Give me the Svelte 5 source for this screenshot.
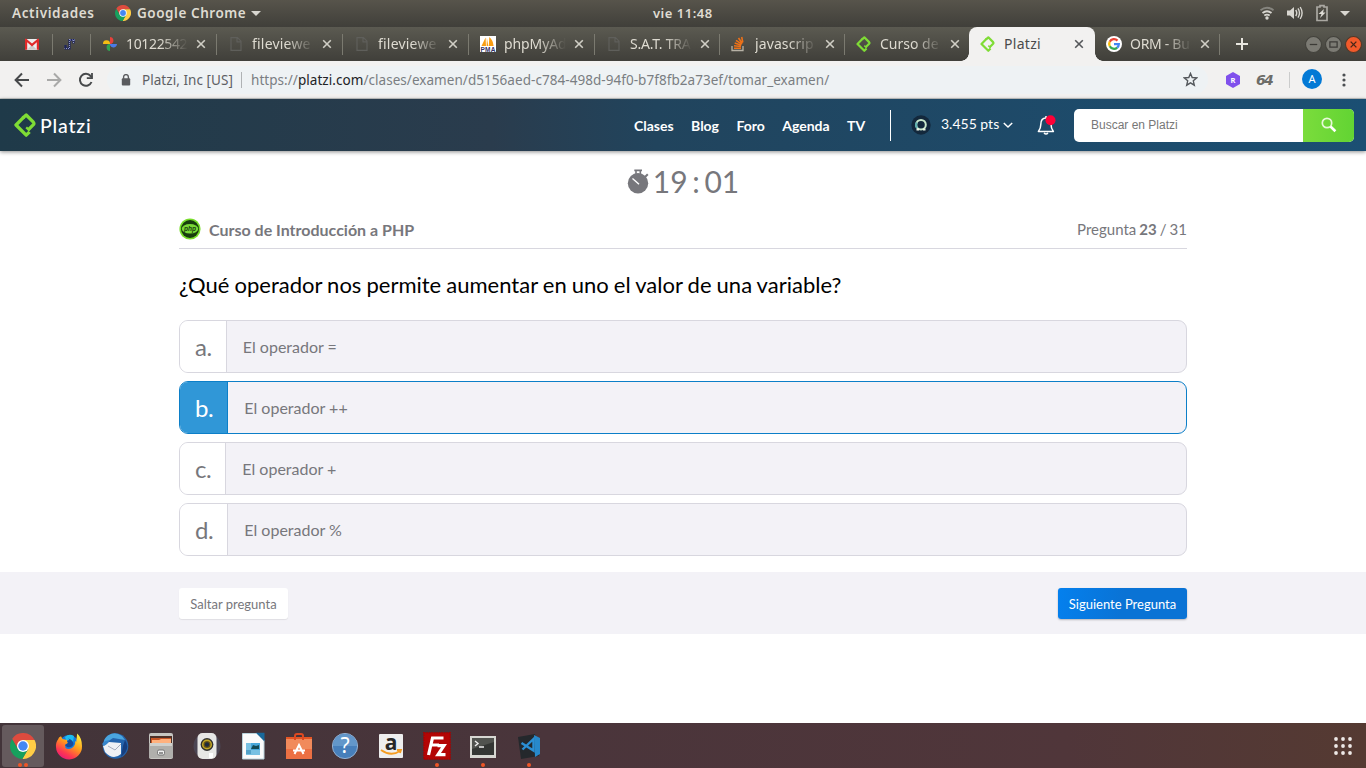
<script>
  const tabs = [
    { icon: 'gmail', w: 53, pad: 25 },
    { icon: 'notes', w: 38, pad: 9 },
    { icon: 'photos', title: '10122542', w: 126, ls: -0.35 },
    { icon: 'file', title: 'fileviewe', w: 126, ls: 0.2 },
    { icon: 'file', title: 'fileviewe', w: 126, ls: 0.2 },
    { icon: 'pma', title: 'phpMyAd', w: 126, ls: -0.1 },
    { icon: 'file', title: 'S.A.T. TRA', w: 125, ls: -0.25 },
    { icon: 'stack', title: 'javascrip', w: 125, ls: 0.1 },
    { icon: 'platzi', title: 'Curso de', w: 124, ls: 0 },
    { icon: 'platzi', title: 'Platzi', w: 126, active: true, ls: 0.3 },
    { icon: 'google', title: 'ORM - Bu', w: 125, ls: -0.3 }
  ];
  const nav = ['Clases', 'Blog', 'Foro', 'Agenda', 'TV'];
  const options = [
    ['a', 'El operador ='],
    ['b', 'El operador ++'],
    ['c', 'El operador +'],
    ['d', 'El operador %']
  ];
  const selected = 'b';
  const dock = [
    { icon: 'chrome', dots: 2, active: true },
    { icon: 'firefox' },
    { icon: 'thunderbird' },
    { icon: 'files' },
    { icon: 'rhythmbox' },
    { icon: 'writer' },
    { icon: 'software' },
    { icon: 'help' },
    { icon: 'amazon' },
    { icon: 'filezilla', dots: 1 },
    { icon: 'terminal', dots: 1 },
    { icon: 'code', dots: 1 }
  ];
</script>

{#snippet chrome(size)}
  <svg width={size} height={size} viewBox="2 2 44 44">
    <path fill="#dd4b3e" d="M24 14H43.6A22 22 0 0 0 5.54 12.03L15.34 29Z" />
    <path fill="#ffcd46" d="M32.66 29L22.86 45.97A22 22 0 0 0 43.6 14H24Z" />
    <path fill="#17a05d" d="M15.34 29L5.54 12.03A22 22 0 0 0 22.86 45.97L32.66 29Z" />
    <circle cx="24" cy="24" r="10.2" fill="#fff" />
    <circle cx="24" cy="24" r="8" fill="#4587f3" />
  </svg>
{/snippet}

{#snippet platzi(w, h)}
  <svg width={w} height={h} viewBox="0 0 22 24" fill="none" stroke="#7fdc35" stroke-width="3.3" stroke-linejoin="round">
    <path d="M8.6 5.2L12.2 2L19.4 9.2Q20.4 10.4 19.4 11.6L14.2 16.8" />
    <path d="M10 3.8L2 12L12.2 22.2L15.6 18.8" />
    <path d="M12.2 14.4L15.6 17.6" stroke-width="2.2" />
  </svg>
{/snippet}

{#snippet favicon(name)}
  {#if name === 'platzi'}
    {@render platzi(15, 16)}
  {:else}
    <svg width="16" height="16" viewBox="0 0 16 16">
      {#if name === 'gmail'}
        <path fill="#eee" d="M1.5 3H14.5V14H1.5Z" />
        <path fill="#ccc" d="M3 13.8L8 9L13 13.8Z" />
        <path fill="#e02a2a" d="M1 3.6Q1 2.6 2 2.6L8 7.6L14 2.6Q15 2.6 15 3.6V13.8H12.8V6.3L8 10.5L3.2 6.3V13.8H1Z" />
      {:else if name === 'notes'}
        <g fill="none" stroke="#20265d" stroke-width="2.2"><path d="M8.5 3V12.5H4.5V9M8 4H14M12.5 3V7.5" /></g>
        <g fill="none" stroke="#b4badf" stroke-width=".8" stroke-dasharray="1 1"><path d="M8.5 3V12.5H3.5M9 4H14M12.5 4V7" /></g>
      {:else if name === 'photos'}
        <path fill="#f5bd13" d="M1 8A3.5 3.5 0 0 1 8 7.6V8Z" /><path fill="#e8413b" d="M8 1A3.6 3.6 0 0 1 9 8H8Z" />
        <path fill="#4b7be8" d="M15 8A3.6 3.6 0 0 1 8 9V8Z" /><path fill="#30a352" d="M8 15A3.6 3.6 0 0 1 7 8H8Z" />
      {:else if name === 'file'}
        <path fill="none" stroke="#5f5f5b" stroke-width="1.2" d="M3 1.6H9.5L13 5.2V14.4H3ZM9 1.6V5.8H13" />
      {:else if name === 'pma'}
        <path fill="#fff" d="M0 0H16V16H0Z" /><path fill="#f99d12" d="M1.5 10L5.6 1.5L6 10ZM6.6 10L6.9 2L8.3 10ZM8.8 10L9.3 1Q13 4 13.6 10Z" />
        <text x="8" y="15.7" text-anchor="middle" textLength="15" font-family="Liberation Sans" font-weight="700" font-size="6.5" fill="#333266">PMA</text>
      {:else if name === 'stack'}
        <path fill="none" stroke="#b7b2a6" stroke-width="1.3" d="M1 10V14.5H12V10" />
        <path fill="none" stroke="#ed7118" stroke-width="1.6" d="M3 12.3H10M3 9.8L10 10.5M3.7 7.1L10.3 9.2M5 4.4L10.8 8.1M7.5 2L11.3 7.5M10.7 1L11.8 6.4" />
      {:else if name === 'google'}
        <circle cx="8" cy="8" r="8" fill="#fff" />
        <g fill="none" stroke-width="2.3"><path stroke="#ea4335" d="M11.5 4.6A4.8 4.8 0 0 0 3.7 5.8" /><path stroke="#fbbc05" d="M3.7 5.8A4.8 4.8 0 0 0 3.8 10.3" /><path stroke="#34a853" d="M3.8 10.3A4.8 4.8 0 0 0 11.2 11.6" /><path stroke="#4285f4" d="M11.2 11.6A4.8 4.8 0 0 0 12.8 8.2H8" /></g>
      {/if}
    </svg>
  {/if}
{/snippet}

{#snippet appicon(name)}
  {#if name === 'chrome'}
    {@render chrome(26)}
  {:else}
    <svg width="28" height="28" viewBox="0 0 28 28">
      {#if name === 'firefox'}
        <defs><linearGradient id="ff" x1=".8" y1="0" x2=".2" y2="1"><stop offset="0" stop-color="#fff23f" /><stop offset=".42" stop-color="#ff9c1c" /><stop offset=".75" stop-color="#ff3850" /><stop offset="1" stop-color="#e51580" /></linearGradient></defs>
        <circle cx="14" cy="13" r="10" fill="#177bdd" />
        <path fill="#1bbdf0" d="M10 5Q14 1 19 4L18 10L11 8Z" />
        <path fill="url(#ff)" d="M4 5.5L6 4.2L7.5 7L12 8L13 11L10 13L10.5 16Q13 18 17 16Q21 13 20 9L21.2 10L22.2 1.5Q27 6 27 14A13 13 0 0 1 1 15Q.7 10 3 7.5Z" />
        <path fill="#174b9d" d="M10 13L13 11L12 9L14.5 7.8L13 6.6Q18 8 18.5 12Q17 16 12 15Z" />
      {:else if name === 'thunderbird'}
        <circle cx="14.5" cy="14" r="12.8" fill="#2464ac" />
        <path fill="#4aa5df" d="M7 3.5Q14 -1 21 4L24 8L12 6L3 12Q2 7 7 3.5Z" /><path fill="#173f7f" d="M24 8Q30 17 20 25L22 14Z" />
        <path fill="#eff1f5" d="M2 14L8 10L20 11L20 22Q12 29 4 20Z" />
        <path fill="none" stroke="#a6adbd" d="M7 14L14 18L20 12" /><path fill="#3685cc" d="M1 12L4 9L9 8L6 12L3 14Z" />
      {:else if name === 'files'}
        <rect x="2" y="1" width="24" height="26" rx="2" fill="#c6c5c1" /><rect x="3" y="4" width="22" height="8" fill="#4e3027" />
        <path fill="#c85524" d="M4 6H24V11H4Z" /><path fill="#ffb17e" d="M5 8L12 8L14 7H24V11H5Z" /><path fill="#b0afac" d="M2 11H26V26H2Z" /><path fill="#d0d0cd" d="M3 11H25V14H3Z" />
        <rect x="10.5" y="18" width="7" height="5" rx="1.5" fill="#eee" stroke="#666" stroke-width=".8" /><path stroke="#555" stroke-width="1.2" d="M12 21H16" />
      {:else if name === 'rhythmbox'}
        <circle cx="14" cy="14" r="13.5" fill="#56607a" opacity=".4" /><rect x="4.5" y="1" width="19" height="26" rx="5" fill="#e7e7e5" />
        <circle cx="14" cy="12.5" r="6.4" fill="#313130" /><circle cx="14" cy="12.5" r="4.3" fill="#665314" stroke="#c2a626" stroke-width="1.5" /><circle cx="14" cy="12.5" r="2.2" fill="#1f2a3d" /><path fill="#fff" d="M16 21H20V26H16Z" />
      {:else if name === 'writer'}
        <path fill="#fbfbfb" stroke="#b9d3dc" d="M3.5 1.5H18L25 8.5V27H3.5Z" /><path fill="#18699b" d="M17 .8H25.5V9.5Z" />
        <path fill="#78c1e3" d="M7 11H21V23H7Z" /><path fill="#48a7da" d="M12 11H21V18H12Z" /><path fill="#124954" d="M12 17L14 13L17 14L20 13V17Z" /><path stroke="#2f83ae" d="M7 19H12M7 21H12" />
      {:else if name === 'software'}
        <path fill="#e55625" d="M1 5H27V27H1Z" /><path fill="#f18a5b" d="M1 7H27V27H1Z" /><path fill="#ec7043" d="M1 17H27V27H1Z" /><path fill="none" stroke="#df4921" stroke-width="2" d="M10 8V4Q10 2 12 2H16Q18 2 18 4V8" />
        <path fill="none" stroke="#fff" stroke-width="2" d="M9.5 22L14 13L18.5 22M8 18.5H20" />
      {:else if name === 'help'}
        <circle cx="14" cy="14" r="12.6" fill="#477fbb" stroke="#92afd0" /><path fill="#6397ca" d="M2 14A12 12 0 0 1 26 14Z" /><text x="14" y="21" text-anchor="middle" font-family="Noto Sans" font-size="21" fill="#fff">?</text>
      {:else if name === 'amazon'}
        <rect x="2" y="2" width="24" height="24" rx="1" fill="#eee" /><text x="14" y="18" text-anchor="middle" font-family="Open Sans" font-weight="700" font-size="21" fill="#272727">a</text>
        <path fill="none" stroke="#f49c22" stroke-width="1.8" d="M4 18Q14 25 23 19M20 18H24L23 21" />
      {:else if name === 'filezilla'}
        <path fill="#b30505" stroke="#a50303" stroke-width="1.4" stroke-dasharray="1.5 1" d="M.8 .8H27.2V27.2H.8Z" /><path fill="none" stroke="#fff" stroke-width="3.2" d="M5.5 23L9.5 6H20.5M8 13H16M14.5 13.6H21L15 22.6H22.5" />
      {:else if name === 'terminal'}
        <path fill="#d7d7d2" d="M1 4H27V26H1Z" /><path fill="#343634" d="M3 6H25V23H3Z" /><path fill="#51534f" d="M3 6H25V10L3 17Z" /><path fill="none" stroke="#eee" stroke-width="1.4" d="M6 9L9 11.5L6 14M10 15H15" />
      {:else if name === 'code'}
        <path fill="#24282c" d="M3 5L20 2L24 24L6 27Z" /><path fill="none" stroke="#2b8fd4" stroke-width="2.4" d="M6.5 11L18.5 18.5V7L7.5 17.5" /><path fill="#2789cb" d="M19 3L25 6V22L20 25Z" />
      {/if}
    </svg>
  {/if}
{/snippet}

<div class="screen">
  <div class="system">
    <span class="activities">Actividades</span>
    <span class="app">{@render chrome(16)}<b>Google Chrome</b><i class="caret"></i></span>
    <span class="clock">vie 11:48</span>
    <span class="tray">
      <svg width="16" height="16" viewBox="0 0 16 16" fill="none" stroke-width="1.8"><path stroke="#85847e" d="M1.5 5.2Q8 .3 14.5 5.2" /><path stroke="#d8d6d0" d="M3.5 8Q8 4.4 12.5 8M5.3 10.5Q8 8.7 10.7 10.5" /><circle cx="8" cy="13" r="1.7" fill="#d8d6d0" /></svg>
      <svg width="16" height="16" viewBox="0 0 16 16" fill="none" stroke="#d8d6d0" stroke-width="1.4"><path fill="#d8d6d0" stroke="none" d="M0 5.5H3L7 2V14L3 10.5H0Z" /><path d="M8.7 5Q10.8 8 8.7 11M11 3.4Q14 8 11 12.6M13.2 2Q17 8 13.2 14" /></svg>
      <svg width="14" height="18" viewBox="0 0 14 18"><path fill="none" stroke="#aaa8a2" stroke-width="1.7" d="M2 3H5V1.6H9V3H12V16.5H2Z" /><path fill="#dedcd6" d="M9 5L3.5 10H6.5L5 14L10.5 8.5H8Z" /></svg>
      <i class="caret"></i>
    </span>
  </div>

  <div class="tabs">
    {#each tabs as tab, i}
      <div class="tab" class:active={tab.active} class:nosep={i === 8} style:width="{tab.w}px" style:padding-left="{tab.pad ?? 12}px">
        <span class="fav">{@render favicon(tab.icon)}</span>
        {#if tab.title}
          <span class="title" style:letter-spacing="{tab.ls}px">{tab.title}</span>
          <svg class="close" width="10" height="10" viewBox="0 0 10 10"><path d="M1.2 1.2L8.8 8.8M8.8 1.2L1.2 8.8" /></svg>
        {/if}
      </div>
    {/each}
    <svg class="plus" width="12" height="12" viewBox="0 0 12 12"><path stroke="#e8e6df" stroke-width="2" d="M6 0V12M0 6H12" /></svg>
    <div class="winbtns">
      <svg width="17" height="17" viewBox="0 0 16 16"><circle cx="8" cy="8" r="7.5" fill="#7c7b74" stroke="#42413b" /><path stroke="#3c3b37" stroke-width="1.2" d="M4.5 8H11.5" /></svg>
      <svg width="17" height="17" viewBox="0 0 16 16"><circle cx="8" cy="8" r="7.5" fill="#7c7b74" stroke="#42413b" /><path fill="none" stroke="#3c3b37" stroke-width="1.2" d="M4.6 5.5H11.4V10.5H4.6Z" /></svg>
      <svg width="17" height="17" viewBox="0 0 16 16"><circle cx="8" cy="8" r="7.5" fill="#f15a2b" stroke="#4f3829" /><path stroke="#472719" stroke-width="1.3" d="M5.3 5.3L10.7 10.7M10.7 5.3L5.3 10.7" /></svg>
    </div>
  </div>

  <div class="toolbar">
    <svg class="ar" width="16" height="16" viewBox="0 0 16 16"><path d="M15 8H2M8 1.5L1.6 8L8 14.5" /></svg>
    <svg class="ar dim" width="16" height="16" viewBox="0 0 16 16"><path d="M1 8H14M8 1.5L14.4 8L8 14.5" /></svg>
    <svg class="ar" width="16" height="16" viewBox="0 0 16 16"><path d="M13.5 10A6 6 0 1 1 12.6 4L14 5.6" /><path d="M14 1V6.2H8.8" stroke-width="1.8" /></svg>
    <div class="omni">
      <svg width="10" height="12" viewBox="0 0 10 12"><rect x=".8" y="4.2" width="8.4" height="7.3" rx="1" fill="#5a5c5f" /><path fill="none" stroke="#5a5c5f" stroke-width="1.4" d="M2.6 5V3A2.4 2.4 0 0 1 7.4 3V5" /></svg>
      <span class="owner">Platzi, Inc [US]</span>
      <span class="bar"></span>
      <span class="url">https://<b>platzi.com</b>/clases/examen/d5156aed-c784-498d-94f0-b7f8fb2a73ef/tomar_examen/</span>
      <svg class="star" width="15" height="15" viewBox="0 0 15 15"><path fill="none" stroke="#54585c" stroke-width="1.4" d="M7.5 1.4L9.2 5.5L13.7 5.9L10.3 8.8L11.3 13.2L7.5 10.8L3.7 13.2L4.7 8.8L1.3 5.9L5.8 5.5Z" /></svg>
    </div>
    <svg class="hex" width="16" height="16" viewBox="0 0 16 16"><path fill="#8050ec" d="M8 0L15 4V12L8 16L1 12V4Z" /><text x="8" y="10.8" text-anchor="middle" font-family="Noto Sans" font-weight="700" font-size="7.5" fill="#fff">R</text></svg>
    <span class="sixty">64</span>
    <span class="tsep"></span>
    <span class="avatar">A</span>
    <svg class="dots" width="4" height="14" viewBox="0 0 4 14" fill="#4c4f52"><circle cx="2" cy="2" r="1.6" /><circle cx="2" cy="7" r="1.6" /><circle cx="2" cy="12" r="1.6" /></svg>
  </div>

  <header>
    <span class="brand">{@render platzi(22, 24)}<span>Platzi</span></span>
    <nav>{#each nav as item}<a href="#top">{item}</a>{/each}</nav>
    <span class="rule"></span>
    <svg class="badge" width="20" height="20" viewBox="0 0 20 20"><circle cx="10" cy="10" r="9.7" fill="#13283c" /><circle cx="10" cy="9.7" r="4.8" fill="none" stroke="#c9e8cb" stroke-width="2" /><path fill="none" stroke="#5fb1b1" stroke-width="2" d="M5.8 7.5A4.8 4.8 0 0 0 6 13" /><path stroke="#eef5e6" stroke-width="1.8" d="M5.5 14.5H8M12 14.5H14.5" /></svg>
    <span class="pts">3.455 pts</span>
    <svg class="chev" width="10" height="7" viewBox="0 0 10 7"><path fill="none" stroke="#fff" stroke-width="1.5" d="M.8 1L5 5L9.2 1" /></svg>
    <svg class="bell" width="19" height="20" viewBox="0 0 19 20"><path fill="none" stroke="#fff" stroke-width="1.5" stroke-linejoin="round" d="M1.4 16.5Q3.8 13.5 3.8 9.5C3.8 4.8 5.8 3 9 3S14 5 14 9.5Q14 13.5 16.4 16.5ZM7 18Q9 20 11 18M9 3V1" /><circle cx="13.5" cy="5.3" r="5" fill="#ff0037" /></svg>
    <div class="search">
      <span>Buscar en Platzi</span>
      <button aria-label="Buscar"><svg width="16" height="16" viewBox="0 0 16 16"><circle cx="6" cy="6" r="4.7" fill="none" stroke="#e7f9d9" stroke-width="1.7" /><path stroke="#fff" stroke-width="2.6" d="M9.5 9.5L14.4 14.2" /></svg></button>
    </div>
  </header>

  <main>
    <div class="timer">
      <svg width="22" height="25" viewBox="0 0 22 25"><circle cx="11" cy="14.3" r="10.2" fill="#77777c" /><path fill="none" stroke="#77777c" stroke-width="1.6" d="M7.3 1.4H15M9 1.8V5M13.3 1.8V5" /><path stroke="#77777c" stroke-width="2" d="M18 8L20.8 5.2" /><path stroke="#fff" stroke-width="1.4" d="M5.5 9.5L12 15.2" /></svg>
      <span>19 : 01</span>
    </div>
    <div class="course">
      <svg width="22" height="22" viewBox="0 0 22 22"><circle cx="11" cy="11" r="10.6" fill="#78dd2b" /><circle cx="11" cy="11" r="9" fill="#173d0d" /><ellipse cx="11" cy="10.8" rx="8.3" ry="4.8" fill="#79d936" /><text x="11" y="12.6" text-anchor="middle" font-family="Liberation Sans" font-weight="700" font-style="italic" font-size="6.5" fill="#173d0d">php</text></svg>
      <h2>Curso de Introducción a PHP</h2>
      <span class="count">Pregunta <b>23</b> / 31</span>
    </div>
    <h1>¿Qué operador nos permite aumentar en uno el valor de una variable?</h1>
    <div class="options">
      {#each options as [letter, text]}
        <div class="option" class:selected={letter === selected}><span class="letter">{letter}.</span><span class="answer">{text}</span></div>
      {/each}
    </div>
  </main>

  <div class="actions"><button class="skip">Saltar pregunta</button><button class="next">Siguiente Pregunta</button></div>

  <div class="dock">
    {#each dock as d}
      <div class="launcher" class:current={d.active}>
        {@render appicon(d.icon)}
        {#if d.dots}<span class="run">{#each Array(d.dots) as _}<i></i>{/each}</span>{/if}
      </div>
    {/each}
    <svg class="apps" width="20" height="20" viewBox="0 0 20 20" fill="#eee9e7">
      {#each [3, 10, 17] as x}{#each [3, 10, 17] as y}<circle cx={x} cy={y} r="1.9" />{/each}{/each}
    </svg>
  </div>
</div>

<style>
  :global(body) { margin: 0; background: #fff; overflow: hidden; }
  * { box-sizing: border-box; }
  .screen { width: 1366px; height: 768px; display: flex; flex-direction: column; overflow: hidden; font-family: Lato, sans-serif; color: #77777c; background: #fff; }
  svg { flex: none; display: block; }

  .system { height: 27px; flex: none; display: grid; grid-template-columns: 115px 538px 1fr auto; align-items: center; padding-bottom: 1px; background: linear-gradient(#57544b, #403f3a); color: #dfdbd2; font: 600 13.5px "Noto Sans", sans-serif; }
  .activities { padding-left: 12px; letter-spacing: .62px; }
  .app { display: flex; align-items: center; gap: 6px; }
  .app b { font-weight: 600; letter-spacing: .55px; }
  .app .caret { margin-left: -1px; }
  .caret { width: 0; height: 0; border: 5px solid transparent; border-top-color: #d8d6d0; border-bottom: 0; }
  .clock { font-size: 13px; letter-spacing: .5px; }
  .tray { display: flex; align-items: center; gap: 12px; padding-right: 16px; }
  .tray svg:nth-child(3) { margin-right: -1px; }

  .tabs { height: 34px; flex: none; display: flex; align-items: center; background: linear-gradient(#5b5a51, #403f3a); font: 14px "Noto Sans", sans-serif; color: #dedbd1; }
  .tab { height: 34px; flex: none; display: flex; align-items: center; position: relative; }
  .tab:not(.active):not(.nosep)::after { content: ''; position: absolute; right: 0; top: 7px; width: 1px; height: 21px; background: #7b7a70; }
  .tab.active { background: #f2f1f0; color: #4a4b4c; border-radius: 8px 8px 0 0; }
  .tab.active::before, .tab.active::after { content: ''; position: absolute; bottom: 0; width: 8px; height: 8px; }
  .tab.active::before { left: -8px; background: radial-gradient(circle at 0 0, transparent 7.5px, #f2f1f0 8px); }
  .tab.active::after { right: -8px; background: radial-gradient(circle at 100% 0, transparent 7.5px, #f2f1f0 8px); z-index: 1; }
  .fav { width: 16px; height: 16px; flex: none; margin-left: -1px; }
  .title { width: 62px; margin: -1px 0 0 8px; overflow: hidden; white-space: nowrap; -webkit-mask-image: linear-gradient(90deg, #000 55%, transparent); mask-image: linear-gradient(90deg, #000 55%, transparent); }
  .active .title { -webkit-mask-image: none; mask-image: none; }
  .close { margin-left: 8px; stroke: #d0cec5; stroke-width: 1.6; }
  .active .close { stroke: #55575a; }
  .plus { margin-left: 16px; }
  .winbtns { display: flex; gap: 3px; margin-left: auto; padding-right: 4px; }

  .toolbar { height: 38px; flex: none; display: flex; align-items: center; background: #f2f1f0; border-bottom: 1px solid #c8cac9; padding-left: 14px; font: 13.5px "Noto Sans", sans-serif; }
  .ar { fill: none; stroke: #47494b; stroke-width: 2; margin-right: 16px; }
  .ar.dim { stroke: #a9a9a8; }
  .omni { width: 1101px; height: 28px; margin-left: -3px; border-radius: 14px; background: #eef2f4; display: flex; align-items: center; padding-left: 14px; white-space: nowrap; }
  .owner { margin-left: 11px; width: 93px; color: #5d6064; letter-spacing: .05px; }
  .bar { width: 1px; height: 16px; margin: 0 9px 0 6px; background: #afb2b4; }
  .url { color: #7a7e82; letter-spacing: .05px; }
  .url b { color: #222326; font-weight: 400; }
  .star { margin-left: auto; margin-right: 10px; }
  .hex { margin-left: 17px; }
  .sixty { width: 17px; margin-left: 15px; font: italic 700 14px "DejaVu Sans", sans-serif; letter-spacing: -1.8px; color: #6c6c68; }
  .tsep { width: 1px; height: 16px; margin-left: 16px; background: #cbcccc; }
  .avatar { width: 20px; height: 20px; margin-left: 12px; border-radius: 50%; background: #0379d5; color: #fff; font-size: 11px; line-height: 20px; text-align: center; margin-top: -1px; }
  .dots { margin-left: 20px; }

  header { height: 52px; flex: none; display: flex; align-items: center; padding: 0 12px 0 14px; background: linear-gradient(90deg, #1f3a49, #2a3c4d 36%, #21445d 48%, #1b4f73); box-shadow: 0 1px 4px rgba(0,0,0,.45); color: #fff; position: relative; }
  .brand { width: 620px; display: flex; align-items: center; font-size: 19.5px; font-weight: 500; letter-spacing: .8px; gap: 4px; }
  nav { display: flex; gap: 17.4px; width: 256px; }
  nav a { color: #fff; text-decoration: none; font-size: 14px; font-weight: 700; }
  .rule { width: 1px; height: 31px; background: #fff; }
  .badge { margin-left: 20px; }
  .pts { margin-left: 10px; font-size: 14px; margin-top: -3px; width: 58px; white-space: nowrap; }
  .chev { margin-left: 4px; }
  .bell { margin-left: 24px; }
  .search { display: flex; width: 280px; height: 33px; margin-left: auto; border-radius: 5px; overflow: hidden; background: #fff; }
  .search span { flex: 1; padding-left: 17px; font: 12px/32px "Liberation Sans", sans-serif; color: #777; }
  .search button { width: 51px; border: 0; padding: 0; display: flex; align-items: center; justify-content: center; background: linear-gradient(90deg, #7bdc3c, #62d433); }

  main { width: 1008px; margin: 0 auto; height: 421px; flex: none; }
  .timer { height: 61px; display: flex; align-items: center; justify-content: center; gap: 4px; font-size: 30px; padding-bottom: 2px; }
  .timer svg { margin-top: 2px; }
  .timer span { line-height: 36px; word-spacing: -3px; }
  .course { height: 37px; display: flex; align-items: center; border-bottom: 1px solid #d8d7df; padding-bottom: 2px; }
  .course svg { margin-top: -1px; }
  h2 { margin: 0 0 0 8px; font-size: 16px; font-weight: 700; }
  .count { margin-left: auto; font-size: 15px; word-spacing: -.8px; }
  h1 { margin: 23px 0 22px; color: #000; font-size: 22px; line-height: 26px; font-weight: 400; word-spacing: -.55px; }
  .options { display: flex; flex-direction: column; gap: 8px; }
  .option { height: 53px; display: flex; border: 1px solid #d8d7df; border-radius: 9px; overflow: hidden; background: #f3f2f7; }
  .letter { padding: 0 14px 0 15px; margin-right: -1px; border-right: 1px solid #d8d7df; background: #fff; font-size: 24px; line-height: 52px; letter-spacing: -.4px; }
  .answer { padding-left: 17px; font-size: 16px; line-height: 52px; }
  .selected { border-color: #0c7fc8; }
  .selected .letter { color: #fff; background: #3097d7; border-color: #0c7fc8; }

  .actions { height: 62px; flex: none; background: #f3f2f7; display: flex; justify-content: space-between; padding: 16px 179px 0; }
  .actions button { height: 31px; border: 0; border-radius: 3px; font: 13px Lato, sans-serif; padding: 1px 0 0; }
  .skip { width: 109px; background: #fff; color: #77777c; box-shadow: 0 1px 1px rgba(0,0,0,.08); }
  .next { width: 129px; color: #fff; background: linear-gradient(100deg, #0480ee, #0a73d5 50%); box-shadow: 0 1px 2px rgba(0,0,0,.25); }

  .dock { height: 45px; margin-top: auto; flex: none; display: flex; align-items: center; background: linear-gradient(90deg, #423439, #4a353b 40%, #50363a 78%, #553a32); }
  .launcher { width: 42px; height: 42px; margin: 1px 2px 0; border-radius: 3px; display: flex; align-items: center; justify-content: center; position: relative; flex: none; }
  .current { background: #655a5d; }
  .run { position: absolute; bottom: 0; left: 0; right: 0; display: flex; gap: 2px; justify-content: center; }
  .run i { width: 4px; height: 4px; border-radius: 50%; background: #ef5526; }
  .apps { margin-left: auto; margin-right: 13px; }
</style>
